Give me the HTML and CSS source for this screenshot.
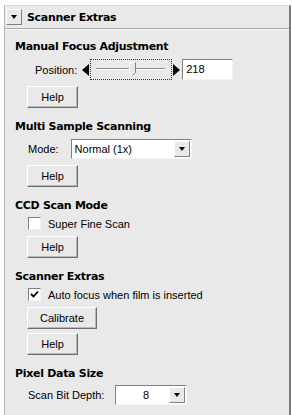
FILE: index.html
```html
<!DOCTYPE html>
<html>
<head>
<meta charset="utf-8">
<link rel="stylesheet" href="styles.css">
</head>
<body>
<div class="panel">
  <div class="header">
    <span class="toggle"><span class="tri-down"></span></span>
    <span class="header-title">Scanner Extras</span>
  </div>
  <div class="body">
    <div class="title t1">Manual Focus Adjustment</div>
    <div class="row pos-row">
      <span class="label">Position:</span>
      <span class="arrow-left"></span>
      <span class="slider">
        <span class="track"></span>
        <span class="thumb"><svg width="7" height="14" viewBox="0 0 7 14"><path d="M0.5 0.5 H6.5 V10.5 L3.5 13.5 L0.5 10.5 Z" fill="#e8e8e8" stroke="none"/><path d="M0.5 11 V0.5 H6" fill="none" stroke="#fff"/><path d="M6.5 0.5 V10.5 L3.5 13.5" fill="none" stroke="#808080"/><path d="M0.5 10.5 L3 13" fill="none" stroke="#fff"/></svg></span>
      </span>
      <span class="arrow-right"></span>
      <span class="input">218</span>
    </div>
    <div class="row"><span class="btn help">Help</span></div>

    <div class="title">Multi Sample Scanning</div>
    <div class="row sel-row">
      <span class="label mode-label">Mode:</span>
      <span class="select mode-select"><span class="sel-text">Normal (1x)</span><span class="drop"><span class="tri-down"></span></span></span>
    </div>
    <div class="row"><span class="btn help">Help</span></div>

    <div class="title">CCD Scan Mode</div>
    <div class="row check-row">
      <span class="check"></span>
      <span class="check-label">Super Fine Scan</span>
    </div>
    <div class="row"><span class="btn help">Help</span></div>

    <div class="title">Scanner Extras</div>
    <div class="row check-row">
      <span class="check"><svg width="9" height="9" viewBox="0 0 9 9"><path d="M1 4 L3.5 6.5 L8 1.5" fill="none" stroke="#000" stroke-width="1.8"/></svg></span>
      <span class="check-label">Auto focus when film is inserted</span>
    </div>
    <div class="row"><span class="btn calibrate">Calibrate</span></div>
    <div class="row tight"><span class="btn help">Help</span></div>

    <div class="title">Pixel Data Size</div>
    <div class="row sel-row depth-row">
      <span class="label depth-label">Scan Bit Depth:</span>
      <span class="select depth-select"><span class="sel-text center">8</span><span class="drop"><span class="tri-down"></span></span></span>
    </div>
  </div>
</div>
</body>
</html>
```

FILE: styles.css
```css
* { box-sizing: border-box; }
html, body { margin: 0; padding: 0; background: #fff; }
body {
  width: 292px;
  height: 415px;
  overflow: hidden;
  font-family: "Liberation Sans", Arial, sans-serif;
  font-size: 11px;
  color: #000;
}
.panel {
  margin: 5px 1px 0 4px;
  height: 410px;
  background: #e9e9e9;
  border-left: 1px solid #b4b4b4;
  border-top: 1px solid #d8d8d8;
  border-right: 2px solid #7c7c7c;
}
.header {
  height: 23px;
  display: flex;
  align-items: center;
  gap: 5px;
  padding-left: 1px;
  border-bottom: 1px solid #a8a8a8;
  box-shadow: 0 1px 0 #f8f8f8;
}
.toggle {
  width: 16px;
  height: 16px;
  display: flex;
  align-items: center;
  justify-content: center;
  background: #e9e9e9;
  border-top: 1px solid #fff;
  border-left: 1px solid #fff;
  border-right: 1px solid #808080;
  border-bottom: 1px solid #808080;
}
.tri-down {
  width: 0; height: 0;
  border-left: 3.5px solid transparent;
  border-right: 3.5px solid transparent;
  border-top: 4px solid #000;
}
.header-title, .title {
  font-family: "DejaVu Sans", Verdana, sans-serif;
  font-weight: bold;
  font-size: 11px;
  letter-spacing: -0.3px;
}
.body { padding: 0 0 0 10px; }
.title { height: 14px; line-height: 14px; margin-top: 12px; }
.title.t1 { margin-top: 11px; }
.row {
  display: flex;
  align-items: center;
  padding-left: 12px;
  margin-top: 6px;
}
.row.tight { margin-top: 4px; }
.row.sel-row { margin-top: 5px; }
.row.depth-row { margin-top: 4px; }
.label { color: #000; }
.pos-row { padding-left: 20px; margin-top: 5px; }
.pos-row .label { margin-right: 5px; }
.arrow-left {
  width: 0; height: 0;
  border-top: 6px solid transparent;
  border-bottom: 6px solid transparent;
  border-right: 7px solid #000;
  margin-right: 1px;
}
.arrow-right {
  width: 0; height: 0;
  border-top: 6px solid transparent;
  border-bottom: 6px solid transparent;
  border-left: 7px solid #000;
  margin-left: 1px;
  margin-right: 2px;
}
.slider {
  position: relative;
  width: 82px;
  height: 21px;
  border: 1px dotted #333;
}
.track {
  position: absolute;
  left: 5px; right: 6px; top: 8px;
  height: 2px;
  border-top: 1px solid #8a8a8a;
  border-bottom: 1px solid #fff;
}
.thumb {
  position: absolute;
  left: 38px;
  top: 2px;
  display: block;
  line-height: 0;
}
.input {
  width: 51px;
  height: 21px;
  background: #fff;
  border-top: 1px solid #808080;
  border-left: 1px solid #808080;
  border-right: 1px solid #f4f4f4;
  border-bottom: 1px solid #f4f4f4;
  padding: 3px 0 0 3px;
  line-height: 13px;
}
.btn {
  display: inline-flex;
  align-items: center;
  justify-content: center;
  height: 22px;
  background: #e9e9e9;
  border-top: 1px solid #fff;
  border-left: 1px solid #fff;
  border-right: 1px solid #6e6e6e;
  border-bottom: 1px solid #6e6e6e;
  box-shadow: inset -1px -1px 0 #b8b8b8;
}
.help { width: 51px; }
.calibrate { width: 70px; }
.mode-label { margin-right: 12px; padding-left: 1px; }
.select {
  display: flex;
  align-items: center;
  height: 20px;
  background: #fff;
  border-top: 1px solid #808080;
  border-left: 1px solid #808080;
  border-right: 1px solid #f4f4f4;
  border-bottom: 1px solid #f4f4f4;
}
.mode-select { width: 121px; }
.depth-select { width: 72px; }
.sel-text { flex: 1; padding-left: 3px; }
.sel-text.center { text-align: center; padding-left: 6px; }
.drop {
  width: 16px;
  height: 16px;
  margin-right: 1px;
  display: flex;
  align-items: center;
  justify-content: center;
  background: #e9e9e9;
  border-top: 1px solid #fff;
  border-left: 1px solid #fff;
  border-right: 1px solid #808080;
  border-bottom: 1px solid #808080;
}
.depth-label { margin-right: 11px; padding-left: 1px; }
.row.check-row { margin-top: 4px; }
.check {
  width: 13px;
  height: 13px;
  background: #fff;
  border-top: 1px solid #808080;
  border-left: 1px solid #808080;
  border-right: 1px solid #f4f4f4;
  border-bottom: 1px solid #f4f4f4;
  margin-left: 1px;
  margin-right: 7px;
  display: flex;
  align-items: center;
  justify-content: center;
}
```
